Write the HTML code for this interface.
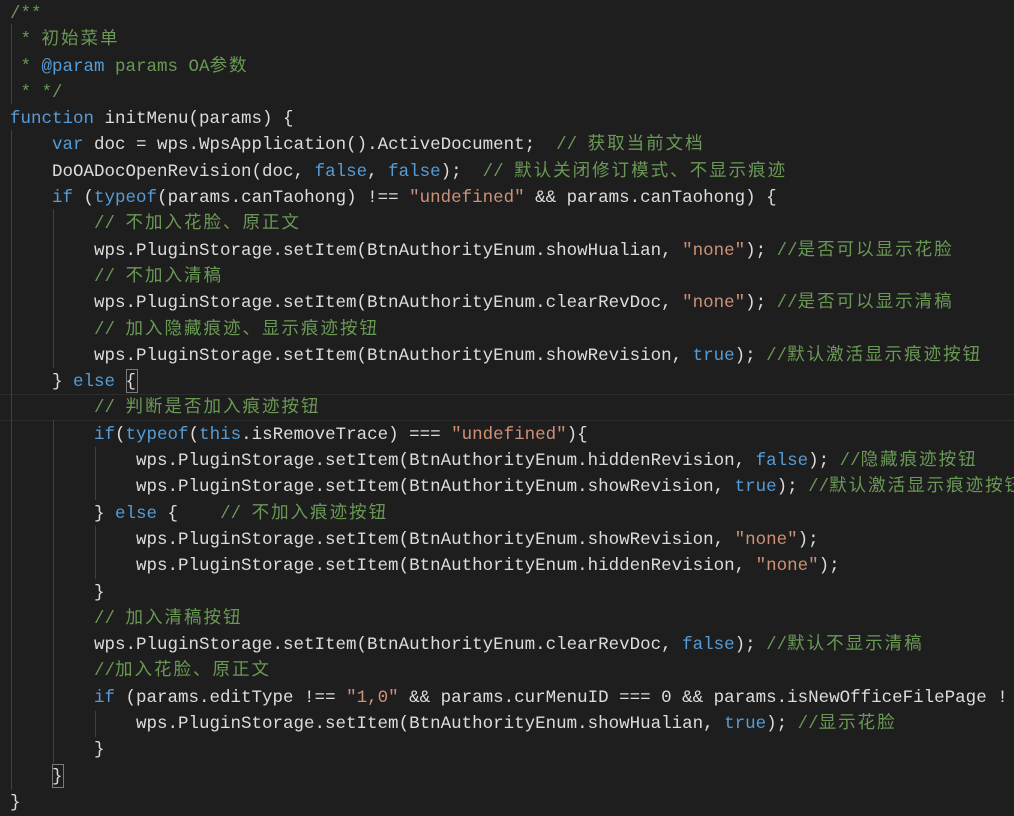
<!DOCTYPE html>
<html><head><meta charset="utf-8"><style>
html,body{margin:0;padding:0;background:#1e1e1e;width:1014px;height:811px;overflow:hidden}
#c{position:absolute;left:10px;top:1px;font-family:"Liberation Mono","Noto Sans CJK SC",monospace;font-size:17.5px;line-height:26.3px;color:#dcdcdc;white-space:pre}
.l{height:26.3px}
.k{color:#569cd6}.s{color:#ce9178}.c{color:#6a9955}
.z{letter-spacing:2px}
.g{position:absolute;width:1px;background:#404040}
.hl{position:absolute;left:0;width:1014px;top:394px;height:25px;border-top:1px solid #2c2c2c;border-bottom:1px solid #2c2c2c}
.bm{position:absolute;border:1px solid #7a7a7a;width:10px;height:22px}
</style></head><body>
<div class="hl"></div>
<div class="g" style="left:11px;top:24px;height:80px"></div>
<div class="g" style="left:11px;top:130px;height:660px"></div>
<div class="g" style="left:53px;top:209px;height:159px"></div>
<div class="g" style="left:53px;top:420px;height:343px"></div>
<div class="g" style="left:95px;top:447px;height:53px"></div>
<div class="g" style="left:95px;top:526px;height:53px"></div>
<div class="g" style="left:95px;top:711px;height:26px"></div>
<div class="bm" style="left:126px;top:369px"></div>
<div class="bm" style="left:52px;top:764px"></div>
<div id="c"><div class="l"><span class="c">/**</span></div><div class="l"><span class="c"> * <span class="z">初始菜单</span></span></div><div class="l"><span class="c"> * </span><span class="k">@param</span><span class="c"> params OA<span class="z">参数</span></span></div><div class="l"><span class="c"> * */</span></div><div class="l"><span class="k">function</span> initMenu(params) {</div><div class="l">    <span class="k">var</span> doc = wps.WpsApplication().ActiveDocument;  <span class="c">// <span class="z">获取当前文档</span></span></div><div class="l">    DoOADocOpenRevision(doc, <span class="k">false</span>, <span class="k">false</span>);  <span class="c">// <span class="z">默认关闭修订模式、不显示痕迹</span></span></div><div class="l">    <span class="k">if</span> (<span class="k">typeof</span>(params.canTaohong) !== <span class="s">"undefined"</span> &amp;&amp; params.canTaohong) {</div><div class="l">        <span class="c">// <span class="z">不加入花脸、原正文</span></span></div><div class="l">        wps.PluginStorage.setItem(BtnAuthorityEnum.showHualian, <span class="s">"none"</span>); <span class="c">//<span class="z">是否可以显示花脸</span></span></div><div class="l">        <span class="c">// <span class="z">不加入清稿</span></span></div><div class="l">        wps.PluginStorage.setItem(BtnAuthorityEnum.clearRevDoc, <span class="s">"none"</span>); <span class="c">//<span class="z">是否可以显示清稿</span></span></div><div class="l">        <span class="c">// <span class="z">加入隐藏痕迹、显示痕迹按钮</span></span></div><div class="l">        wps.PluginStorage.setItem(BtnAuthorityEnum.showRevision, <span class="k">true</span>); <span class="c">//<span class="z">默认激活显示痕迹按钮</span></span></div><div class="l">    } <span class="k">else</span> {</div><div class="l">        <span class="c">// <span class="z">判断是否加入痕迹按钮</span></span></div><div class="l">        <span class="k">if</span>(<span class="k">typeof</span>(<span class="k">this</span>.isRemoveTrace) === <span class="s">"undefined"</span>){</div><div class="l">            wps.PluginStorage.setItem(BtnAuthorityEnum.hiddenRevision, <span class="k">false</span>); <span class="c">//<span class="z">隐藏痕迹按钮</span></span></div><div class="l">            wps.PluginStorage.setItem(BtnAuthorityEnum.showRevision, <span class="k">true</span>); <span class="c">//<span class="z">默认激活显示痕迹按钮</span></span></div><div class="l">        } <span class="k">else</span> {    <span class="c">// <span class="z">不加入痕迹按钮</span></span></div><div class="l">            wps.PluginStorage.setItem(BtnAuthorityEnum.showRevision, <span class="s">"none"</span>);</div><div class="l">            wps.PluginStorage.setItem(BtnAuthorityEnum.hiddenRevision, <span class="s">"none"</span>);</div><div class="l">        }</div><div class="l">        <span class="c">// <span class="z">加入清稿按钮</span></span></div><div class="l">        wps.PluginStorage.setItem(BtnAuthorityEnum.clearRevDoc, <span class="k">false</span>); <span class="c">//<span class="z">默认不显示清稿</span></span></div><div class="l">        <span class="c">//<span class="z">加入花脸、原正文</span></span></div><div class="l">        <span class="k">if</span> (params.editType !== <span class="s">"1,0"</span> &amp;&amp; params.curMenuID === 0 &amp;&amp; params.isNewOfficeFilePage !</div><div class="l">            wps.PluginStorage.setItem(BtnAuthorityEnum.showHualian, <span class="k">true</span>); <span class="c">//<span class="z">显示花脸</span></span></div><div class="l">        }</div><div class="l">    }</div><div class="l">}</div></div>
</body></html>
